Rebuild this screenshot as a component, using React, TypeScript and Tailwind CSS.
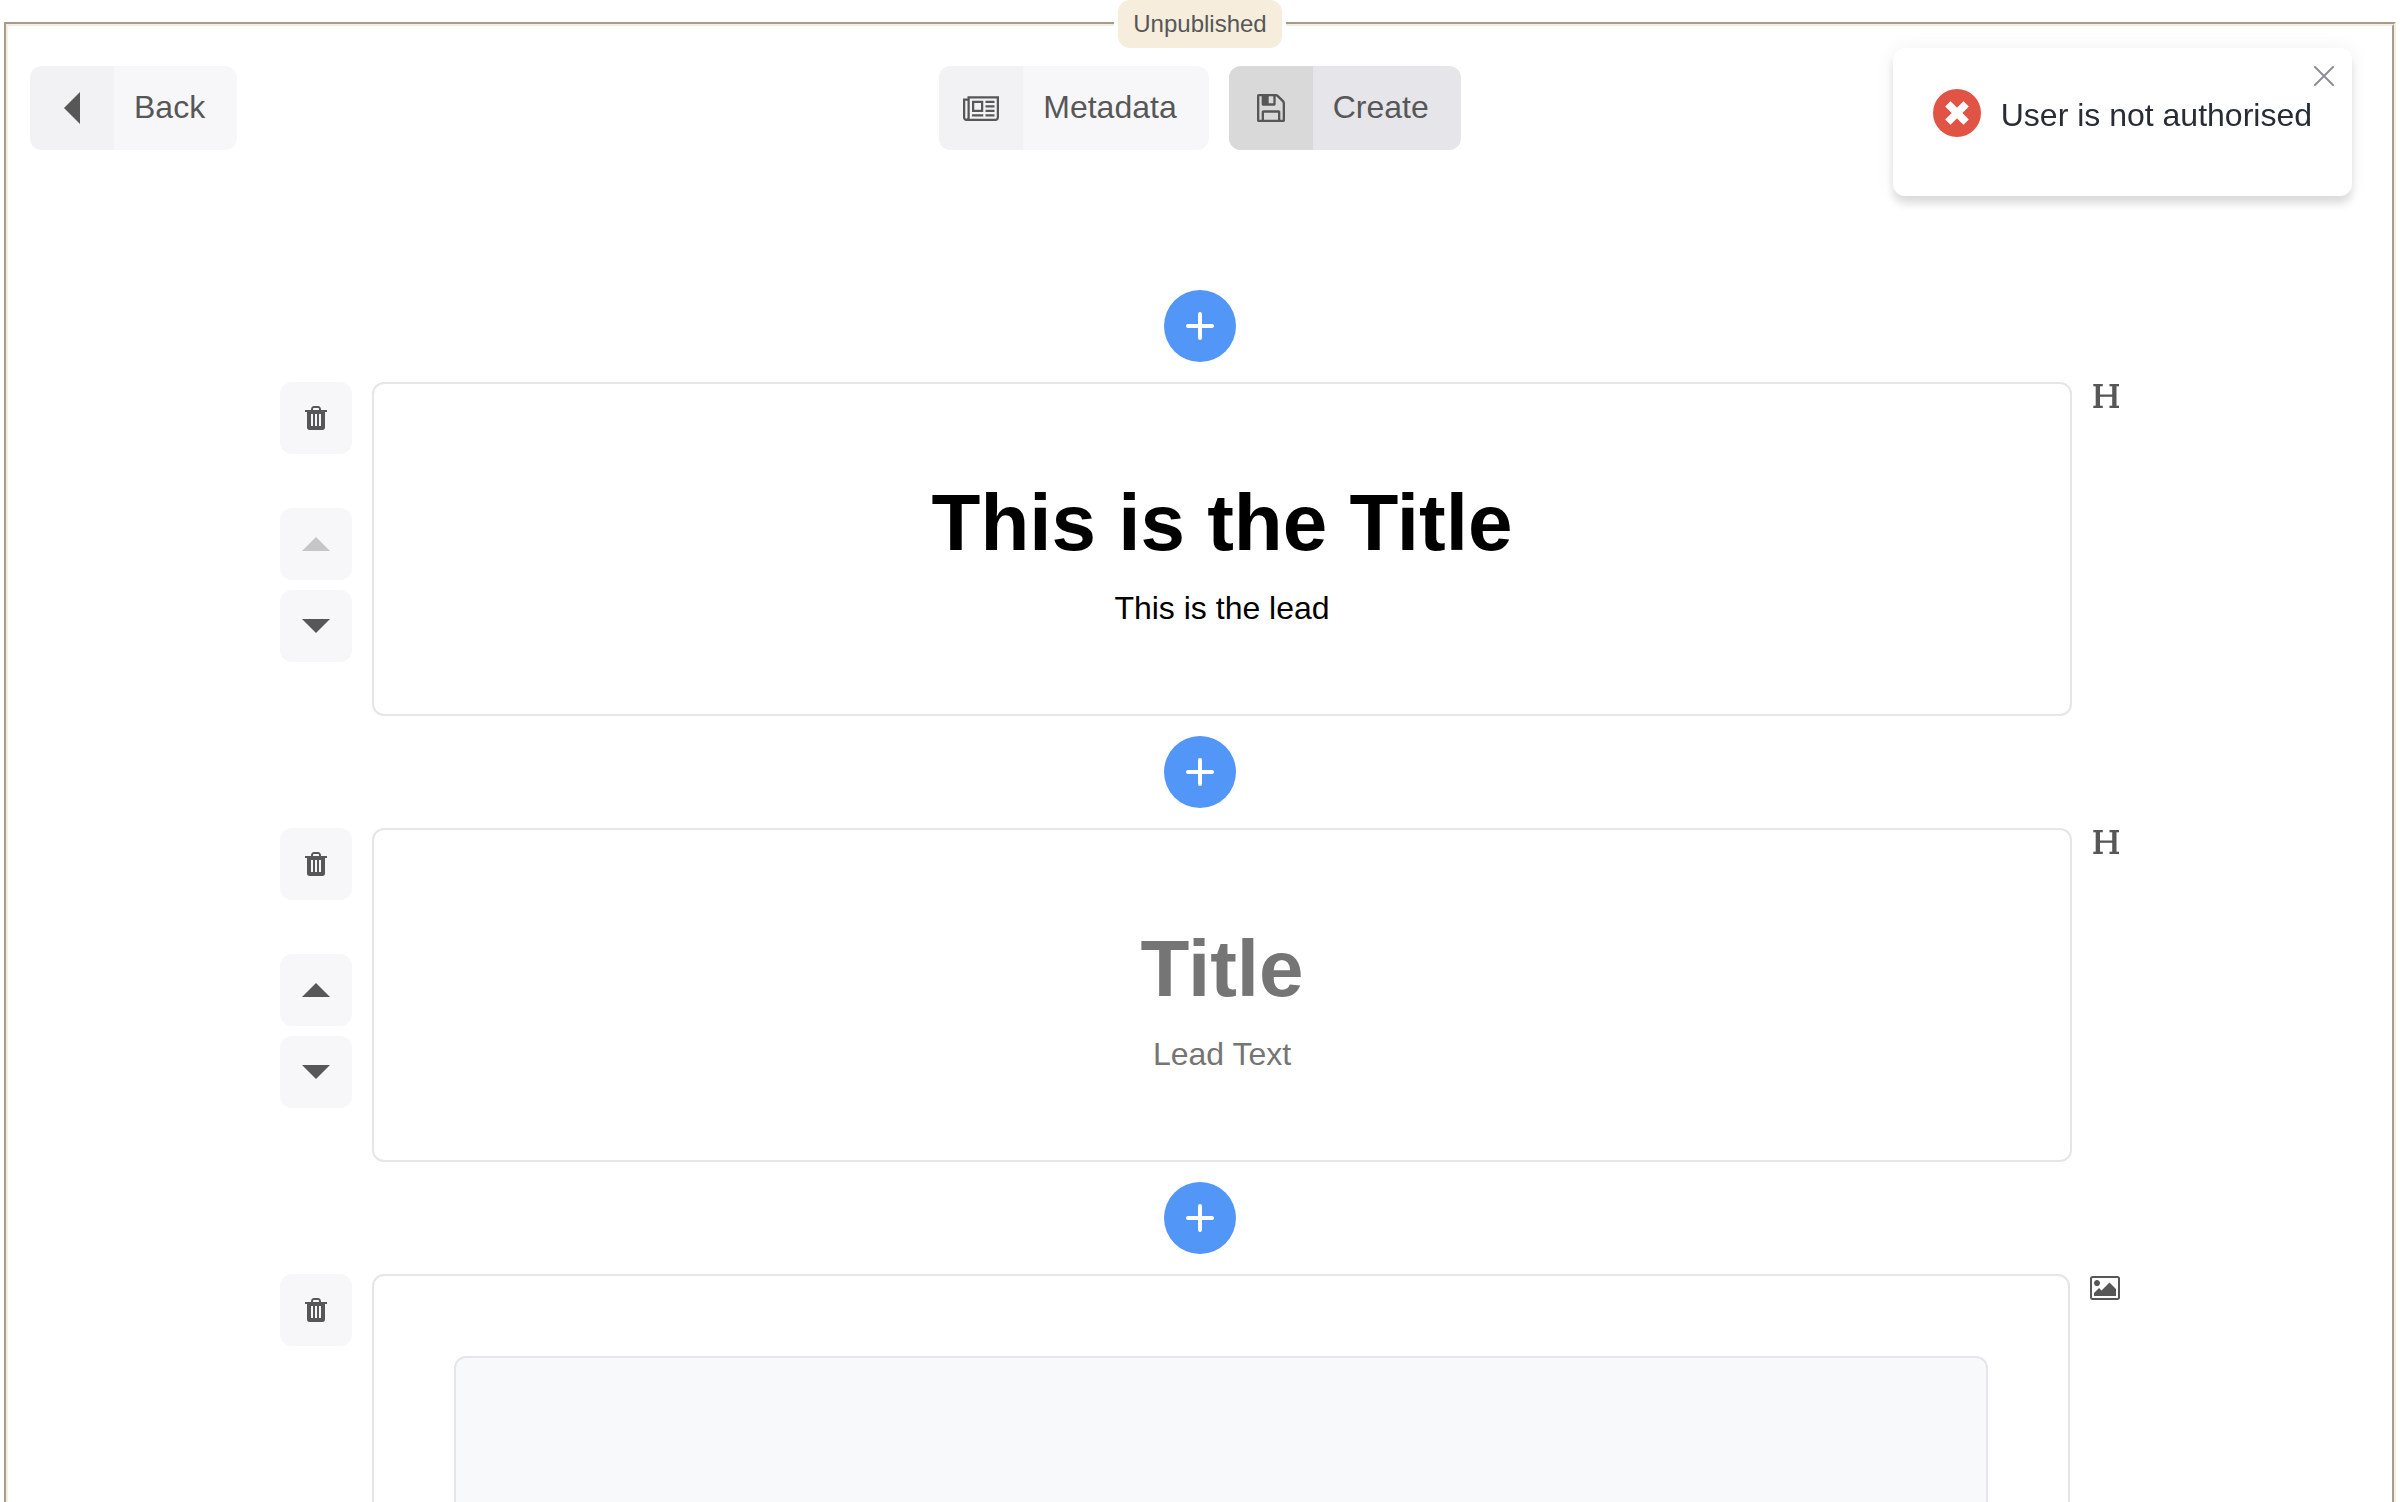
import { Fragment, type ReactNode } from "react";

function ArrowIcon({ direction }: { direction: "up" | "down" }) {
  return (
    <svg className="h-3.5 w-7" viewBox="0 0 28 14" fill="currentColor" aria-hidden="true">
      <path d={direction === "up" ? "M0 14 14 0l14 14z" : "M0 0h28L14 14z"} />
    </svg>
  );
}

function TrashIcon() {
  return (
    <svg className="h-6 w-[22px]" viewBox="0 0 22 24" fill="currentColor" aria-hidden="true">
      <path
        fillRule="evenodd"
        d="M0 4h6V3.500C6 1.500 7.300 0 9 0h4c1.700 0 3 1.500 3 3.500V4h6v2h-2v15.500c0 1.500-1 2.500-2.500 2.500h-13C3 24 2 23 2 21.500V6H0zM8 4h6V3.200C14 2.500 13.600 2 13 2H9c-.6 0-1 .5-1 1.200zM6 8v12h2V8zm4 0v12h2V8zm4 0v12h2V8z"
      />
    </svg>
  );
}

function BackIcon() {
  return (
    <svg className="h-8 w-4" viewBox="0 0 16 32" fill="currentColor" aria-hidden="true">
      <path d="M16 0v32L0 16z" />
    </svg>
  );
}

function NewspaperIcon() {
  return (
    <svg className="h-[25px] w-9" viewBox="0 128 2048 1408" fill="currentColor" aria-hidden="true">
      <path d="M1024 512h-384v384h384v-384zm128 640v128h-640v-128h640zm0-768v640h-640v-640h640zm640 768v128h-512v-128h512zm0-256v128h-512v-128h512zm0-256v128h-512v-128h512zm0-256v128h-512v-128h512zm-1536 960v-960h-128v960q0 26 19 45t45 19 45-19 19-45zm1664 0v-1088h-1536v1088q0 33-11 64h1483q26 0 45-19t19-45zm128-1216v1216q0 80-56 136t-136 56h-1664q-80 0-136-56t-56-136v-1088h256v-128h1792z" />
    </svg>
  );
}

function SaveIcon() {
  return (
    <svg className="size-7" viewBox="0 128 1536 1536" fill="currentColor" aria-hidden="true">
      <path d="M384 1536h768v-384h-768v384zm896 0h128v-896q0-14-10-38.500t-20-34.500l-281-281q-10-10-34-20t-39-10v416q0 40-28 68t-68 28h-576q-40 0-68-28t-28-68v-416h-128v1280h128v-416q0-40 28-68t68-28h832q40 0 68 28t28 68v416zm-384-928v-320q0-13-9.500-22.500t-22.500-9.500h-192q-13 0-22.500 9.500t-9.500 22.500v320q0 13 9.500 22.500t22.500 9.500h192q13 0 22.500-9.500t9.500-22.500zm640 32v928q0 40-28 68t-68 28h-1344q-40 0-68-28t-28-68v-1344q0-40 28-68t68-28h928q40 0 88 20t76 48l280 280q28 28 48 76t20 88z" />
    </svg>
  );
}

function PlusIcon() {
  return (
    <svg className="size-7" viewBox="0 0 28 28" stroke="currentColor" strokeWidth="4" strokeLinecap="round" aria-hidden="true">
      <path d="M14 2v24M2 14h24" />
    </svg>
  );
}

function HeadingIcon() {
  return (
    <svg className="h-6 w-7" viewBox="0 0 28 24" fill="currentColor" aria-label="Heading block" role="img">
      <rect x="1.300" y="0" width="9.500" height="2.300" />
      <rect x="17.500" y="0" width="9.500" height="2.300" />
      <rect x="1.300" y="21.700" width="9.500" height="2.300" />
      <rect x="17.500" y="21.700" width="9.500" height="2.300" />
      <rect x="3.700" y="0" width="4.300" height="24" />
      <rect x="20.200" y="0" width="4.300" height="24" />
      <rect x="6" y="10.500" width="16" height="2.300" />
    </svg>
  );
}

function ImageIcon() {
  return (
    <svg className="h-6 w-[30px]" viewBox="-64 128 1920 1536" fill="currentColor" aria-label="Image block" role="img">
      <path d="M576 576q0 80-56 136t-136 56-136-56-56-136 56-136 136-56 136 56 56 136zm1024 384v448h-1408v-192l320-320 160 160 512-512zm96-704h-1600q-13 0-22.500 9.500t-9.500 22.500v1216q0 13 9.500 22.500t22.500 9.500h1600q13 0 22.500-9.500t9.500-22.500v-1216q0-13-9.500-22.500t-22.500-9.500zm160 32v1216q0 66-47 113t-113 47h-1600q-66 0-113-47t-47-113v-1216q0-66 47-113t113-47h1600q66 0 113 47t47 113z" />
    </svg>
  );
}

function ToolbarButton({ icon, label, active = false }: { icon: ReactNode; label: string; active?: boolean }) {
  return (
    <button
      type="button"
      className={`flex h-[84px] items-center overflow-hidden rounded-xl text-[32px] leading-10 text-[#575757] ${active ? "bg-[#e5e5ea]" : "bg-[#f7f7fa]"}`}
    >
      <span className={`flex size-[84px] items-center justify-center ${active ? "bg-[#d9d9d9]" : "bg-[#f2f2f5]"}`}>{icon}</span>
      <span className="pr-8 pb-0.5 pl-5">{label}</span>
    </button>
  );
}

function SideButton({ label, disabled = false, children }: { label: string; disabled?: boolean; children: ReactNode }) {
  return (
    <button
      type="button"
      aria-label={label}
      disabled={disabled}
      className="flex size-[72px] items-center justify-center rounded-xl bg-[#f7f7fa] text-[#575757] disabled:text-[#c5c6c7]"
    >
      {children}
    </button>
  );
}

function AddButton() {
  return (
    <button
      type="button"
      aria-label="Add block"
      className="flex size-[72px] shrink-0 items-center justify-center self-center rounded-full bg-[#5296f8] text-white"
    >
      <PlusIcon />
    </button>
  );
}

function Block({ icon, first = false, children }: { icon: ReactNode; first?: boolean; children: ReactNode }) {
  return (
    <section className="flex items-stretch gap-5">
      <div className="flex flex-col">
        <SideButton label="Delete block">
          <TrashIcon />
        </SideButton>
        <div className="my-auto flex flex-col gap-2.5">
          <SideButton label="Move block up" disabled={first}>
            <ArrowIcon direction="up" />
          </SideButton>
          <SideButton label="Move block down">
            <ArrowIcon direction="down" />
          </SideButton>
        </div>
      </div>
      <div className="min-w-0 flex-1 rounded-xl border-2 border-[#e5e5ea] p-20">{children}</div>
      <div className="pt-0.5 text-[#575757]">{icon}</div>
    </section>
  );
}

function TitleFields({ title, lead }: { title: string; lead: string }) {
  return (
    <div className="flex flex-col text-center text-black">
      <input
        aria-label="Title"
        placeholder="Title"
        defaultValue={title}
        className="h-[118px] w-full bg-transparent text-center text-[80px] font-bold outline-none placeholder:text-[#757575]"
      />
      <input
        aria-label="Lead Text"
        placeholder="Lead Text"
        defaultValue={lead}
        className="h-[52px] w-full bg-transparent text-center text-[32px] outline-none placeholder:text-[#757575]"
      />
    </div>
  );
}

function Toast() {
  return (
    <div
      role="alert"
      className="fixed top-12 right-12 flex h-[148px] items-start gap-5 rounded-xl bg-white px-10 pt-[41px] shadow-[0_8px_8px_rgba(0,0,0,0.12),0_0_20px_rgba(0,0,0,0.06)]"
    >
      <svg className="size-12" viewBox="0 0 48 48" aria-hidden="true">
        <circle cx="24" cy="24" r="24" fill="#e15445" />
        <path
          d="M17.500 17.500l13 13M30.500 17.500l-13 13"
          stroke="#fff"
          strokeWidth="7.500"
          strokeLinecap="square"
        />
      </svg>
      <p className="pt-1.5 text-[32px] leading-10 text-[#272c36]">User is not authorised</p>
      <button type="button" aria-label="Close" className="absolute top-[18px] right-[18px] text-[#8e8e93]">
        <svg className="size-5" viewBox="0 0 20 20" stroke="currentColor" strokeWidth="2" strokeLinecap="round" aria-hidden="true">
          <path d="M1 1l18 18M19 1 1 19" />
        </svg>
      </button>
    </div>
  );
}

const headings = [
  { title: "This is the Title", lead: "This is the lead" },
  { title: "", lead: "" },
];

export default function App() {
  return (
    <div className="h-screen overflow-y-auto bg-white font-['Liberation_Sans',Arial,sans-serif] [scrollbar-width:none]">
      <fieldset className="mx-1 min-h-full border-4 border-[#f6eddd] [border-style:groove]">
        <legend className="mx-auto px-1">
          <span className="flex h-12 items-center rounded-xl bg-[#f6eddd] px-[15px] text-2xl text-[#575757]">Unpublished</span>
        </legend>

        <header className="grid grid-cols-[1fr_auto_1fr] items-center px-[22px] pt-[18px]">
          <div className="flex">
            <ToolbarButton icon={<BackIcon />} label="Back" />
          </div>
          <div className="flex gap-5">
            <ToolbarButton icon={<NewspaperIcon />} label="Metadata" />
            <ToolbarButton icon={<SaveIcon />} label="Create" active />
          </div>
        </header>

        <main className="mx-auto flex max-w-[1840px] flex-col gap-5 pt-[140px] pb-20">
          <AddButton />
          {headings.map((heading, index) => (
            <Fragment key={index}>
              <Block icon={<HeadingIcon />} first={index === 0}>
                <TitleFields title={heading.title} lead={heading.lead} />
              </Block>
              <AddButton />
            </Fragment>
          ))}
          <Block icon={<ImageIcon />}>
            <div className="h-[400px] rounded-xl border-2 border-[#e5e5ea] bg-[#f7f9fa]" />
          </Block>
        </main>
      </fieldset>
      <Toast />
    </div>
  );
}
